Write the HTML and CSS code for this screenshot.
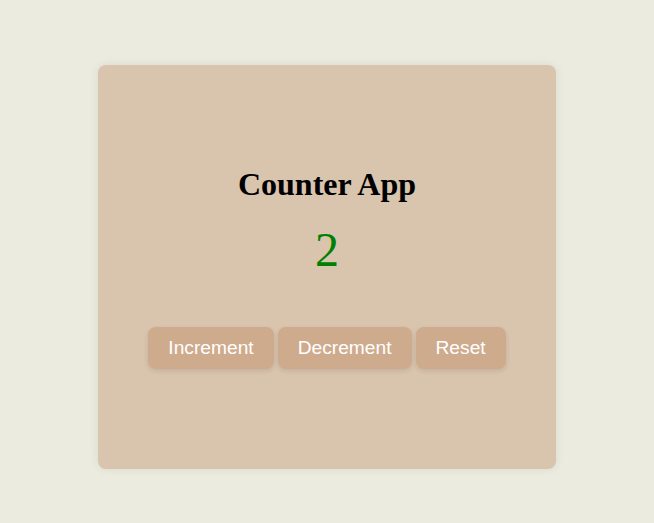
FILE: index.html
```html
<!DOCTYPE html>
<html lang="en">
<head>
<meta charset="utf-8">
<title>Counter App</title>
<link rel="stylesheet" href="styles.css">
</head>
<body>
  <div class="card">
    <h1 class="title">Counter App</h1>
    <div class="count">2</div>
    <div class="actions">
      <button class="btn">Increment</button>
      <button class="btn">Decrement</button>
      <button class="btn">Reset</button>
    </div>
  </div>
</body>
</html>
```
FILE: styles.css
```css
html, body {
  margin: 0;
  padding: 0;
}
body {
  background: #ebebdf;
  padding-top: 65px;
  font-family: "Liberation Serif", "Times New Roman", serif;
  height: 523px;
  box-sizing: border-box;
}
.card {
  width: 458px;
  height: 404px;
  margin: 0 auto;
  box-sizing: border-box;
  background: #d9c4ae;
  border-radius: 8px;
  box-shadow: 0 0 10px rgba(0, 0, 0, 0.08);
  display: flex;
  flex-direction: column;
  align-items: center;
  justify-content: center;
}
.title {
  margin: 0 0 19px;
  font-size: 32px;
  line-height: 37px;
  font-weight: bold;
  color: #000;
}
.count {
  font-size: 48px;
  line-height: 55px;
  color: #008000;
  margin-bottom: 50px;
}
.actions {
  display: flex;
  gap: 4px;
}
.btn {
  font-family: "Liberation Sans", Arial, sans-serif;
  font-size: 19.2px;
  line-height: 22px;
  padding: 10px 20px;
  border: 0;
  border-radius: 8px;
  background: #cfab8d;
  color: #fff;
  box-shadow: 0 2px 5px rgba(0, 0, 0, 0.1);
  cursor: pointer;
}
```
